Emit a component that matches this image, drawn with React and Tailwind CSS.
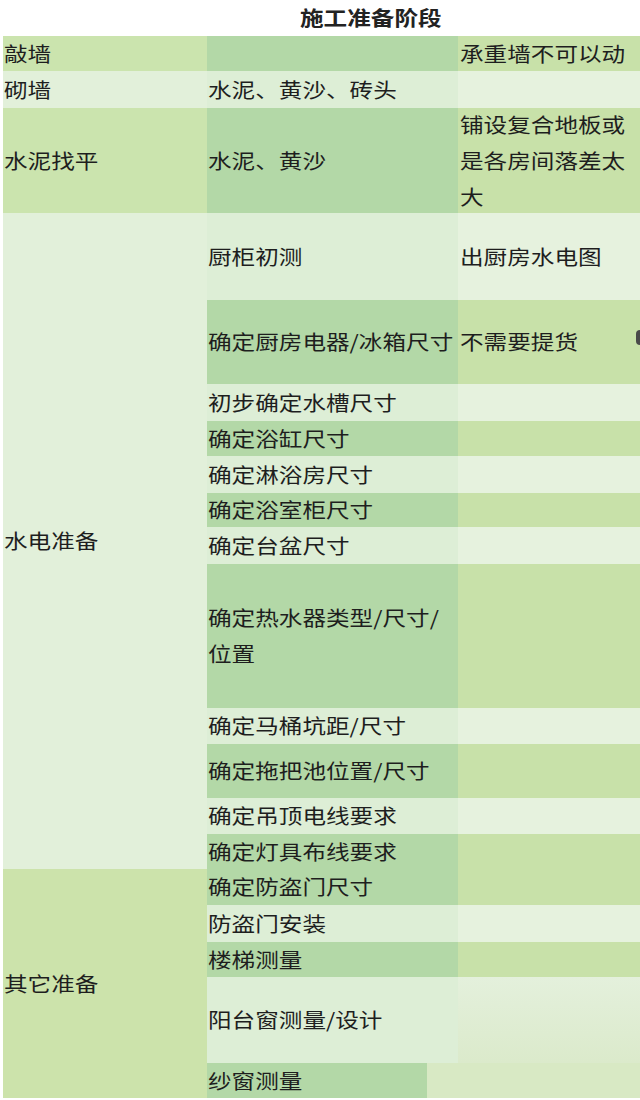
import React from "react";

const tone = {
  dark: ["bg-[#cbe4ae]", "bg-[#b3d8a7]", "bg-[#c8e1a9]"],
  pale: ["bg-[#e2f0da]", "bg-[#ddeed6]", "bg-[#e6f2de]"],
};

const topRows = [
  { a: "敲墙", b: "", c: "承重墙不可以动", h: "h-[35px]", t: "dark" },
  { a: "砌墙", b: "水泥、黄沙、砖头", c: "", h: "h-[37px]", t: "pale" },
  {
    a: "水泥找平",
    b: "水泥、黄沙",
    c: ["铺设复合地板或", "是各房间落差太", "大"],
    h: "h-[105px]",
    t: "dark",
  },
];

const waterRows = [
  { b: "厨柜初测", c: "出厨房水电图", h: "h-[87px]", t: "pale" },
  { b: "确定厨房电器/冰箱尺寸", c: "不需要提货", h: "h-[84px]", t: "dark" },
  { b: "初步确定水槽尺寸", h: "h-[37px]", t: "pale" },
  { b: "确定浴缸尺寸", h: "h-[35px]", t: "dark" },
  { b: "确定淋浴房尺寸", h: "h-[37px]", t: "pale" },
  { b: "确定浴室柜尺寸", h: "h-[34px]", t: "dark" },
  { b: "确定台盆尺寸", h: "h-[37px]", t: "pale" },
  { b: ["确定热水器类型/尺寸/", "位置"], h: "h-[144px]", t: "dark" },
  { b: "确定马桶坑距/尺寸", h: "h-[36px]", t: "pale" },
  { b: "确定拖把池位置/尺寸", h: "h-[54px]", t: "dark" },
  { b: "确定吊顶电线要求", h: "h-[36px]", t: "pale" },
  { b: "确定灯具布线要求", h: "h-[35px]", t: "dark" },
];

const otherRows = [
  { b: "确定防盗门尺寸", h: "h-[36px]", t: "dark" },
  { b: "防盗门安装", h: "h-[37px]", t: "pale" },
  { b: "楼梯测量", h: "h-[35px]", t: "dark" },
];

// 原图文字横向拉宽，用 scale-x 还原
const Text = ({ children }) => {
  if (!children) return null;
  const lines = Array.isArray(children) ? children : [children];
  return (
    <span className="inline-block origin-left scale-x-[1.18] whitespace-nowrap">
      {lines.map((line, i) => (
        <span key={i} className="block">
          {line}
        </span>
      ))}
    </span>
  );
};

const Cell = ({ className, children }) => (
  <div className={`flex items-center pl-[1px] ${className}`}>
    <Text>{children}</Text>
  </div>
);

const SubRow = ({ row }) => (
  <div className={`flex ${row.h}`}>
    <Cell className={`w-[251px] ${tone[row.t][1]}`}>{row.b}</Cell>
    <Cell className={`w-[182px] pl-[2px] ${tone[row.t][2]}`}>{row.c}</Cell>
  </div>
);

export default function App() {
  return (
    <div
      className="relative w-[640px] h-[1100px] bg-white text-[20px] leading-[36px] text-[#1e1e1e] overflow-hidden"
      style={{ fontFamily: '"Noto Sans CJK SC", "Noto Sans", sans-serif' }}
    >
      {/* 标题 */}
      <div className="h-[36px] pl-[300px] flex items-center font-bold text-[#222]">
        <Text>施工准备阶段</Text>
      </div>

      <div className="ml-[3px] w-[637px]">
        {topRows.map((r, i) => (
          <div key={i} className={`flex ${r.h}`}>
            <Cell className={`w-[204px] ${tone[r.t][0]}`}>{r.a}</Cell>
            <Cell className={`w-[251px] ${tone[r.t][1]}`}>{r.b}</Cell>
            <Cell className={`w-[182px] pl-[2px] ${tone[r.t][2]}`}>{r.c}</Cell>
          </div>
        ))}

        {/* 水电准备 */}
        <div className="flex">
          <Cell className="w-[204px] bg-[#e2f0da]">水电准备</Cell>
          <div className="flex flex-col">
            {waterRows.map((r, i) => (
              <SubRow key={i} row={r} />
            ))}
          </div>
        </div>

        {/* 其它准备 */}
        <div className="flex">
          <Cell className="w-[204px] bg-[#cce3ab]">其它准备</Cell>
          <div className="flex flex-col">
            {otherRows.map((r, i) => (
              <SubRow key={i} row={r} />
            ))}
            <div className="flex h-[86px]">
              <Cell className="w-[251px] bg-[#ddeed6]">阳台窗测量/设计</Cell>
              <div className="w-[182px] bg-gradient-to-b from-[#e4f0dc] to-[#dbeacb]" />
            </div>
            <div className="flex h-[35px]">
              <div className="w-[220px] bg-[#b3d8a7] flex items-center pl-[1px]">
                <Text>纱窗测量</Text>
              </div>
              <div className="w-[213px] bg-[#d8e9c4]" />
            </div>
          </div>
        </div>
      </div>

      {/* 右侧边缘残影 */}
      <div className="absolute left-[636px] top-[330px] w-[4px] h-[15px] rounded-l-sm bg-[#4a4a4a]" />
    </div>
  );
}
